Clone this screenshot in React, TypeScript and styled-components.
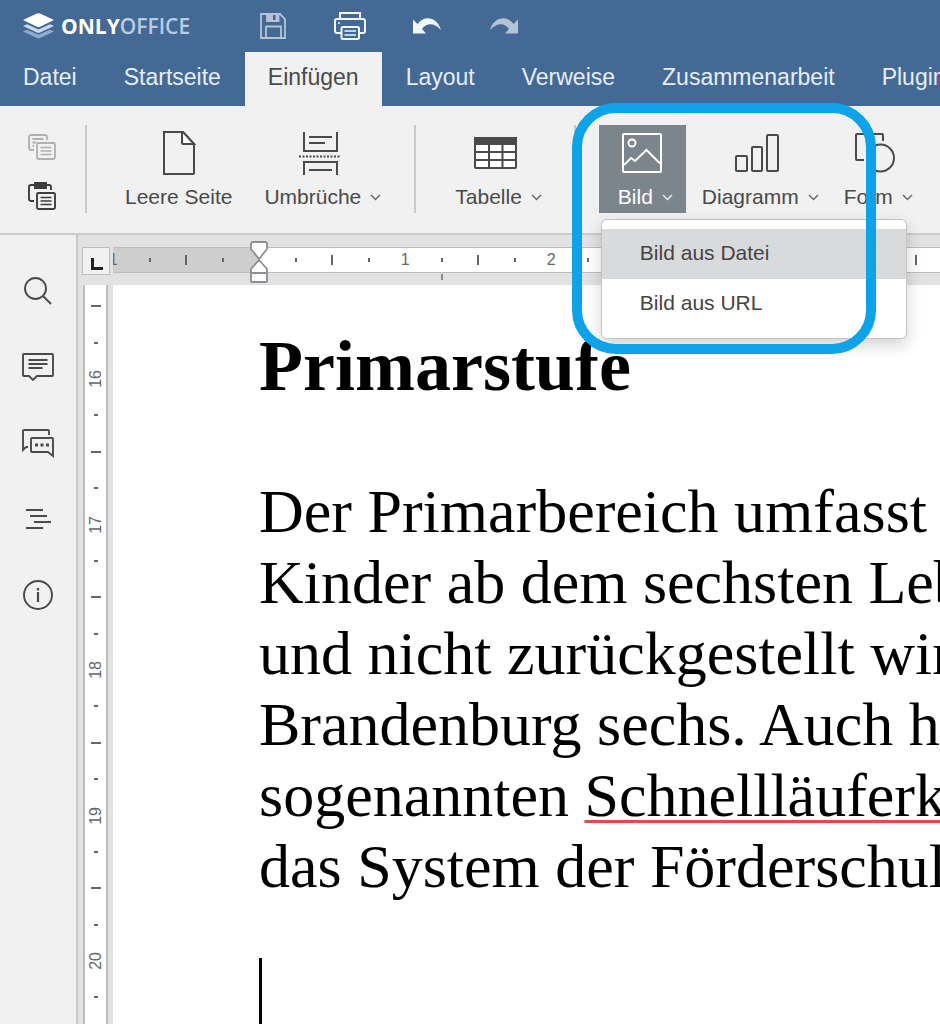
import React from "react";
import styled, { createGlobalStyle, css } from "styled-components";

const sans = `"Liberation Sans", Arial, sans-serif`;
const serif = `"Liberation Serif", "Times New Roman", serif`;

const GlobalStyle = createGlobalStyle`
  * { box-sizing: border-box; }
  body { margin: 0; background: #fff; font-family: ${sans}; color: #444; }
  button { font: inherit; color: inherit; border: 0; background: none; padding: 0; margin: 0; }
  svg { display: block; flex: none; overflow: visible; }
`;

const Shell = styled.div`
  display: flex;
  flex-direction: column;
  height: 100vh;
  overflow: hidden;
`;

/* ---------- header ---------- */

const Header = styled.header`
  background: #446995;
  color: #e6eef9;
`;

const TitleRow = styled.div`
  display: flex;
  align-items: center;
  height: 52px;
  padding-left: 23px;
`;

const Logo = styled.a`
  display: flex;
  align-items: center;
  gap: 7px;
  width: 167px;
  color: #fff;
  text-decoration: none;
  font: 700 21px/28px "Open Sans", ${sans};
`;

const LogoLight = styled.span`
  font-weight: 600;
  color: #b9cce4;
`;

const QuickActions = styled.div`
  display: flex;
  margin-left: 44px;
`;

const QuickButton = styled.button<{ $faded?: boolean }>`
  display: flex;
  justify-content: center;
  align-items: center;
  width: 77px;
  height: 48px;
  color: ${(p) => (p.$faded ? "#b4c3d6" : "#f2f7ff")};
`;

const Tabs = styled.nav`
  display: flex;
  gap: 1px;
  height: 54px;
`;

const Tab = styled.button<{ $active?: boolean }>`
  flex: none;
  padding: 0 23px 4px;
  font-size: 23px;
  line-height: 28px;
  ${(p) => p.$active && css`background: #f1f1f1; color: #4a4a4a;`}
`;

/* ---------- toolbar ---------- */

const Toolbar = styled.div`
  position: relative;
  z-index: 2;
  display: flex;
  align-items: flex-start;
  height: 129px;
  padding: 19px 0 0 28px;
  background: #f1f1f1;
  border-bottom: 2px solid #cbcbcb;
`;

const Clipboard = styled.div`
  display: flex;
  flex-direction: column;
  gap: 20px;
  width: 28px;
  padding-top: 7px;
  flex: none;
`;

const SmallButton = styled.button<{ $disabled?: boolean }>`
  display: block;
  height: 29px;
  color: ${(p) => (p.$disabled ? "#b0b0b0" : "#3d3d3d")};
`;

const Divider = styled.div`
  flex: none;
  width: 2px;
  height: 88px;
  background: #cbcbcb;
`;

const ToolGroup = styled.div<{ $gap: number; $before: number; $after: number }>`
  display: flex;
  flex: none;
  gap: ${(p) => p.$gap}px;
  margin-left: ${(p) => p.$before}px;
  margin-right: ${(p) => p.$after}px;
`;

const ToolButton = styled.button<{ $active?: boolean }>`
  display: flex;
  flex-direction: column;
  align-items: center;
  flex: none;
  height: 88px;
  min-width: 87px;
  padding: 0 8px;
  color: #4a4a4a;
  ${(p) => p.$active && css`padding-left: 14px; background: #7d858c; color: #fff;`}
`;

const ToolIcon = styled.span<{ $menu?: boolean }>`
  display: flex;
  align-items: center;
  height: 56px;
  padding-right: ${(p) => (p.$menu ? 6 : 0)}px;
`;

const ToolLabel = styled.span`
  display: flex;
  align-items: center;
  gap: 9px;
  font-size: 21px;
  line-height: 32px;
`;

const MenuAnchor = styled.div`
  position: relative;
`;

const Menu = styled.div`
  position: absolute;
  top: 94px;
  left: 2px;
  width: 306px;
  padding: 9px 0;
  background: #fff;
  border: 1px solid #c4c4c4;
  border-radius: 6px;
  box-shadow: 0 6px 16px rgba(0, 0, 0, 0.18);
`;

const MenuItem = styled.button<{ $hover?: boolean }>`
  display: block;
  width: 100%;
  height: 50px;
  padding: 0 38px 2px;
  text-align: left;
  font-size: 21px;
  background: ${(p) => (p.$hover ? "#d8dadc" : "transparent")};
`;

const Marker = styled.div`
  position: absolute;
  top: -22px;
  left: -27px;
  width: 304px;
  height: 251px;
  border: 10px solid #0ea2e9;
  border-radius: 44px;
  pointer-events: none;
`;

/* ---------- workspace ---------- */

const Workspace = styled.div`
  display: flex;
  flex: 1;
  min-height: 0;
`;

const Sidebar = styled.aside`
  display: flex;
  flex-direction: column;
  flex: none;
  width: 78px;
  padding-top: 18px;
  background: #f1f1f1;
  border-right: 2px solid #cbcbcb;
`;

const SideButton = styled.button`
  display: flex;
  align-items: center;
  justify-content: center;
  height: 76px;
  color: #4a4a4a;
`;

const Editor = styled.main`
  display: flex;
  flex-direction: column;
  flex: 1;
  min-width: 0;
  background: #e2e2e2;
`;

const RulerRow = styled.div`
  display: flex;
  height: 50px;
  padding-left: 4px;
`;

const TabStop = styled.button`
  flex: none;
  display: flex;
  align-items: center;
  justify-content: center;
  width: 28px;
  height: 28px;
  margin: 12px 3px 0 0;
  padding: 5px 0 0 2px;
  border: 1px solid #bdbdbd;
  background: #f1f1f1;
`;

const RulerTrack = styled.div`
  position: relative;
  flex: 1;
  min-width: 0;
  display: flex;
  height: 26px;
  margin-top: 12px;
  background: linear-gradient(to right, #cecece 146px, #fff 146px);
  border: solid #bdbdbd;
  border-width: 1px 0;
`;

const RulerClip = styled.div`
  display: flex;
  flex: 1;
  min-width: 0;
  overflow: hidden;
`;

const UnitPair = styled.div<{ $pull?: boolean }>`
  flex: none;
  display: grid;
  grid-template-columns: repeat(8, 1fr);
  width: 292px;
  place-items: center;
  margin-left: ${(p) => (p.$pull ? -164 : 0)}px;
`;

const Tick = styled.i<{ $long?: boolean; $vertical?: boolean }>`
  width: ${(p) => (p.$vertical ? (p.$long ? 10 : 4) : 2)}px;
  height: ${(p) => (p.$vertical ? 2 : p.$long ? 10 : 4)}px;
  background: #666;
`;

const RulerNumber = styled.span<{ $vertical?: boolean }>`
  font-size: 16px;
  line-height: 20px;
  color: #666;
  ${(p) =>
    p.$vertical &&
    css`
      writing-mode: vertical-rl;
      transform: rotate(180deg);
    `}
`;

const IndentHandle = styled.svg`
  position: absolute;
  left: 137px;
  top: -7px;
`;

const DefaultStop = styled.i`
  position: absolute;
  left: 328px;
  top: 26px;
  width: 2px;
  height: 6px;
  background: #8a8a8a;
`;

const PageRow = styled.div`
  display: flex;
  flex: 1;
  min-height: 0;
  padding-left: 5px;
`;

const SideRuler = styled.div`
  flex: none;
  width: 25px;
  padding-top: 3px;
  margin-right: 5px;
  overflow: hidden;
  background: #fff;
  border: solid #bdbdbd;
  border-width: 0 2px;
`;

const UnitPairDown = styled.div`
  display: grid;
  grid-template-rows: repeat(8, 1fr);
  height: 291px;
  place-items: center;
`;

const Page = styled.article`
  flex: 1;
  min-width: 0;
  padding: 40px 0 0 146px;
  overflow: hidden;
  background: #fff;
  color: #000;
  font-family: ${serif};
  white-space: nowrap;
`;

const Heading = styled.h1`
  margin: 0 0 69px;
  font-size: 72px;
  line-height: 82px;
  font-weight: 700;
`;

const Paragraph = styled.p`
  margin: 0;
  font-size: 62px;
  line-height: 71px;
`;

const Line = styled.span`
  display: block;
`;

const Misspelled = styled.span`
  text-decoration: underline 3px #e5484d;
  text-underline-offset: 4px;
  text-decoration-skip-ink: none;
`;

const Caret = styled.div`
  width: 3px;
  height: 71px;
  margin-top: 56px;
  background: #000;
`;

/* ---------- drawings ---------- */

const LogoMark = () => (
  <svg width="31" height="26" viewBox="0 0 31 26">
    <path d="M0 18.5 4 16.7 15.5 21.8 27 16.7 31 18.5 17 25a3 3 0 0 1-3 0z" fill="#8facd0" />
    <path d="M0 13 4 11.2 15.5 16.5 27 11.2 31 13 17 19.6a3 3 0 0 1-3 0z" fill="#cbdaec" />
    <path d="M0 7 14 .6a3 3 0 0 1 3 0L31 7 17 13.8a3 3 0 0 1-3 0z" fill="#fff" />
  </svg>
);

const SaveIcon = () => (
  <svg width="26" height="26" viewBox="0 0 26 26" fill="none" stroke="currentColor" strokeWidth="1.8">
    <path d="M1 1h19l5 5v19H1zM6 25V13.5h15V25M7 1v7h11.5V1" />
    <path d="M7 1h6v6H7zM15.5 1h3v7h-3z" fill="currentColor" stroke="none" />
  </svg>
);

const PrintIcon = () => (
  <svg width="32" height="28" viewBox="0 0 32 28" fill="none" stroke="currentColor" strokeWidth="2">
    <path d="M6 6V1h20v5M7 21H3a2 2 0 0 1-2-2V9a2 2 0 0 1 2-2h26a2 2 0 0 1 2 2v10a2 2 0 0 1-2 2h-4" />
    <rect x="7.5" y="15" width="17.5" height="12" rx="1.5" />
    <path d="M10.5 19h11.5M10.5 23h11.5M4 11h2" strokeWidth="1.6" />
  </svg>
);

const UndoIcon = ({ flip }: { flip?: boolean }) => (
  <svg width="28" height="16" viewBox="0 0 28 16" fill="currentColor">
    <path
      transform={flip ? "matrix(-1 0 0 1 28 0)" : undefined}
      d="M0 1.500V15.500h13L9 11C13 5 21 4 28 12 24-1.500 11-3 4.500 6z"
    />
  </svg>
);

const CopyIcon = () => (
  <svg width="28" height="26" viewBox="0 0 28 26" fill="none" stroke="currentColor" strokeWidth="1.8">
    <path d="M6 16H3a2 2 0 0 1-2-2V3a2 2 0 0 1 2-2h14a2 2 0 0 1 2 2v3M4.500 5h11M4.500 8.500H8M4.500 12H6" />
    <rect x="9" y="9" width="18" height="16" rx="1.5" />
    <path d="M12.500 13.500h11M12.500 17h11M12.500 20.500h11" strokeWidth="1.5" />
  </svg>
);

const PasteIcon = () => (
  <svg width="28" height="28" viewBox="0 0 28 28" fill="none" stroke="currentColor" strokeWidth="1.9">
    <path d="M6 19H3a2 2 0 0 1-2-2V5a2 2 0 0 1 2-2h18a2 2 0 0 1 2 2v3" />
    <path d="M7 1h11v5H7z" fill="currentColor" />
    <rect x="9" y="11" width="18" height="16" rx="1.5" />
    <path d="M12.500 15.500h11M12.500 19h11M12.500 22.500h11" strokeWidth="1.6" />
  </svg>
);

const BlankPageIcon = () => (
  <svg width="32" height="44" viewBox="0 0 32 44" fill="none" stroke="currentColor" strokeWidth="2">
    <path d="M1 1h19l11 12v29a1 1 0 0 1-1 1H1z" />
    <path d="M19 1v11a1 1 0 0 0 1 1h11L20 1z" fill="#fff" />
  </svg>
);

const BreaksIcon = () => (
  <svg width="42" height="44" viewBox="0 0 42 44" fill="none" stroke="currentColor" strokeWidth="2">
    <path d="M5 1v19h33V1M5 44V31h33v13M10 6h23M10 12h16M10 39h23" />
    <path d="M0 25.500h42" strokeDasharray="2 1.5" />
  </svg>
);

const TableIcon = () => (
  <svg width="43" height="32" viewBox="0 0 43 32" fill="none" stroke="currentColor" strokeWidth="2">
    <rect x="1" y="1" width="41" height="30" rx="1" fill="#fff" />
    <path d="M1 1h41v6H1z" fill="currentColor" />
    <path d="M1 15h41M1 23h41M15 7v24M28.500 7v24" />
  </svg>
);

const PictureIcon = () => (
  <svg width="40" height="40" viewBox="0 0 40 40" fill="none" stroke="currentColor" strokeWidth="2">
    <rect x="1" y="1" width="38" height="38" rx="1" />
    <circle cx="10" cy="10" r="3.5" />
    <path d="M2 32 9 25l4 3L24.500 17 38 30.500" />
  </svg>
);

const ChartIcon = () => (
  <svg width="44" height="38" viewBox="0 0 44 38" fill="none" stroke="currentColor" strokeWidth="2">
    <rect x="1" y="22" width="11" height="15" rx="1" />
    <rect x="17" y="13" width="10" height="24" rx="1" />
    <rect x="32" y="1" width="11" height="36" rx="1" />
  </svg>
);

const ShapeIcon = () => (
  <svg width="40" height="40" viewBox="0 0 40 40" fill="none" stroke="currentColor" strokeWidth="2">
    <path d="M9 27H2a1 1 0 0 1-1-1V2a1 1 0 0 1 1-1h25a1 1 0 0 1 1 1v6" />
    <circle cx="25.5" cy="25" r="13.5" />
  </svg>
);

const Chevron = () => (
  <svg width="11" height="7" viewBox="0 0 11 7" fill="none" stroke="currentColor" strokeWidth="1.5" opacity="0.8">
    <path d="m1 1 4.500 4.500L10 1" />
  </svg>
);

const SearchIcon = () => (
  <svg width="28" height="28" viewBox="0 0 28 28" fill="none" stroke="currentColor" strokeWidth="1.9">
    <circle cx="11.5" cy="11.5" r="10.5" />
    <path d="m19 19 8 8" />
  </svg>
);

const CommentIcon = () => (
  <svg width="32" height="28" viewBox="0 0 32 28" fill="none" stroke="currentColor" strokeWidth="1.9">
    <path d="M2 1h28a1 1 0 0 1 1 1v20a1 1 0 0 1-1 1H15l-4 4-4-4H2a1 1 0 0 1-1-1V2a1 1 0 0 1 1-1zM6.500 7h19M6.500 11h19M6.500 15h14" />
  </svg>
);

const ChatIcon = () => (
  <svg width="32" height="28" viewBox="0 0 32 28" fill="none" stroke="currentColor" strokeWidth="1.9">
    <path d="M6 18H4l-3 3V2a1 1 0 0 1 1-1h24a1 1 0 0 1 1 1v4" />
    <path d="M10 9h20a1 1 0 0 1 1 1v17l-5-4H10a1 1 0 0 1-1-1V10a1 1 0 0 1 1-1z" />
    <path d="M13 16h3M18.500 16h3M24 16h3" strokeWidth="3" />
  </svg>
);

const OutlineIcon = () => (
  <svg width="26" height="20" viewBox="0 0 26 20" fill="none" stroke="currentColor" strokeWidth="1.9">
    <path d="M1 1h17M5 7h17M9 13h17M1 19h17" />
  </svg>
);

const InfoIcon = () => (
  <svg width="30" height="30" viewBox="0 0 30 30" fill="none" stroke="currentColor" strokeWidth="1.9">
    <circle cx="15" cy="15" r="14" />
    <path d="M15 12v10M15 8v2.500" strokeWidth="2.2" />
  </svg>
);

/* ---------- data ---------- */

const tabs = ["Datei", "Startseite", "Einfügen", "Layout", "Verweise", "Zusammenarbeit", "Plugins"];

const sideTools = [
  { name: "Suchen", icon: <SearchIcon /> },
  { name: "Kommentare", icon: <CommentIcon /> },
  { name: "Chat", icon: <ChatIcon /> },
  { name: "Navigation", icon: <OutlineIcon /> },
  { name: "Info", icon: <InfoIcon /> },
];

type ToolProps = { label: string; icon: React.ReactNode; menu?: boolean; active?: boolean };

const Tool = ({ label, icon, menu, active }: ToolProps) => (
  <ToolButton $active={active} aria-haspopup={menu ? "menu" : undefined}>
    <ToolIcon $menu={menu}>{icon}</ToolIcon>
    <ToolLabel>
      {label}
      {menu && <Chevron />}
    </ToolLabel>
  </ToolButton>
);

/* One number followed by its quarter, half and three-quarter marks. */
const Unit = ({ value }: { value?: number }) => (
  <>
    <RulerNumber>{value}</RulerNumber>
    <Tick />
    <Tick $long />
    <Tick />
  </>
);

const UnitDown = ({ value }: { value: number }) => (
  <>
    <Tick $vertical $long />
    <Tick $vertical />
    <RulerNumber $vertical>{value}</RulerNumber>
    <Tick $vertical />
  </>
);

export default function App() {
  return (
    <Shell>
      <GlobalStyle />
      <Header>
        <TitleRow>
          <Logo href="#">
            <LogoMark />
            <span>
              ONLY<LogoLight>OFFICE</LogoLight>
            </span>
          </Logo>
          <QuickActions>
            <QuickButton $faded aria-label="Speichern"><SaveIcon /></QuickButton>
            <QuickButton aria-label="Drucken"><PrintIcon /></QuickButton>
            <QuickButton aria-label="Rückgängig"><UndoIcon /></QuickButton>
            <QuickButton $faded aria-label="Wiederholen"><UndoIcon flip /></QuickButton>
          </QuickActions>
        </TitleRow>
        <Tabs>
          {tabs.map((t) => (
            <Tab key={t} $active={t === "Einfügen"}>{t}</Tab>
          ))}
        </Tabs>
      </Header>

      <Toolbar>
        <Clipboard>
          <SmallButton $disabled aria-label="Kopieren"><CopyIcon /></SmallButton>
          <SmallButton aria-label="Einfügen"><PasteIcon /></SmallButton>
        </Clipboard>
        <ToolGroup $gap={0} $before={29} $after={0}><Divider /></ToolGroup>
        <ToolGroup $gap={16} $before={30} $after={25}>
          <Tool label="Leere Seite" icon={<BlankPageIcon />} />
          <Tool label="Umbrüche" icon={<BreaksIcon />} menu />
        </ToolGroup>
        <Divider />
        <ToolGroup $gap={0} $before={31} $after={24}>
          <Tool label="Tabelle" icon={<TableIcon />} menu />
        </ToolGroup>
        <Divider />
        <ToolGroup $gap={8} $before={23} $after={0}>
          <MenuAnchor>
            <Tool label="Bild" icon={<PictureIcon />} menu active />
            <Menu role="menu">
              <MenuItem role="menuitem" $hover>Bild aus Datei</MenuItem>
              <MenuItem role="menuitem">Bild aus URL</MenuItem>
            </Menu>
            <Marker />
          </MenuAnchor>
          <Tool label="Diagramm" icon={<ChartIcon />} menu />
          <Tool label="Form" icon={<ShapeIcon />} menu />
        </ToolGroup>
      </Toolbar>

      <Workspace>
        <Sidebar>
          {sideTools.map((s) => (
            <SideButton key={s.name} aria-label={s.name}>{s.icon}</SideButton>
          ))}
        </Sidebar>
        <Editor>
          <RulerRow>
            <TabStop aria-label="Tabstopp">
              <svg width="12" height="12" viewBox="0 0 12 12" fill="none" stroke="#222" strokeWidth="3">
                <path d="M1.500 0v10.500H12" />
              </svg>
            </TabStop>
            <RulerTrack>
              <RulerClip>
                <UnitPair $pull><Unit /><Unit value={1} /></UnitPair>
                <UnitPair><Unit /><Unit value={1} /></UnitPair>
                <UnitPair><Unit value={2} /><Unit /></UnitPair>
                <UnitPair><Unit /><Unit /></UnitPair>
              </RulerClip>
              <IndentHandle width="18" height="42" viewBox="0 0 18 42" fill="#fff" stroke="#8b8f94" strokeWidth="1.8">
                <path d="M3 1h12a2 2 0 0 1 2 2v5l-8 10L1 8V3a2 2 0 0 1 2-2zM9 19l8 9v4H1v-4zM1 32h16v8a1 1 0 0 1-1 1H2a1 1 0 0 1-1-1z" />
              </IndentHandle>
              <DefaultStop />
            </RulerTrack>
          </RulerRow>
          <PageRow>
            <SideRuler>
              <UnitPairDown><UnitDown value={16} /><UnitDown value={17} /></UnitPairDown>
              <UnitPairDown><UnitDown value={18} /><UnitDown value={19} /></UnitPairDown>
              <UnitPairDown><UnitDown value={20} /><UnitDown value={21} /></UnitPairDown>
            </SideRuler>
            <Page>
              <Heading>Primarstufe</Heading>
              <Paragraph>
                <Line>Der Primarbereich umfasst</Line>
                <Line>Kinder ab dem sechsten Leb</Line>
                <Line>und nicht zurückgestellt wird</Line>
                <Line>Brandenburg sechs. Auch h</Line>
                <Line>sogenannten <Misspelled>Schnellläuferk</Misspelled></Line>
                <Line>das System der Förderschul</Line>
              </Paragraph>
              <Caret />
            </Page>
          </PageRow>
        </Editor>
      </Workspace>
    </Shell>
  );
}
